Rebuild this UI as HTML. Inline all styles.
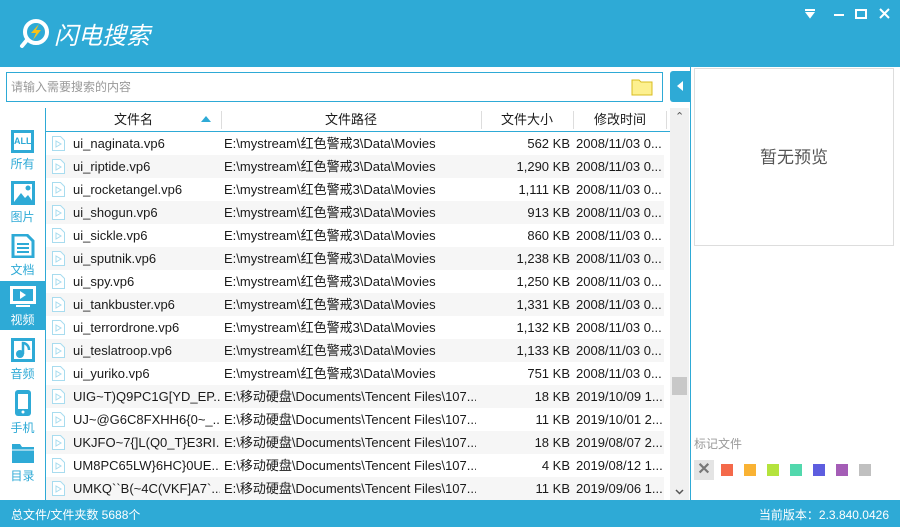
<!DOCTYPE html>
<html><head><meta charset="utf-8"><style>
*{margin:0;padding:0;box-sizing:border-box}
body{width:900px;height:527px;position:relative;overflow:hidden;background:#fff;font-family:"Liberation Sans","Noto Sans CJK SC",sans-serif;font-size:13px;color:#1a1a1a}
.abs{position:absolute}
#title{left:0;top:0;width:900px;height:67px;background:#2eaad6}
#status{left:0;top:500px;width:900px;height:27px;background:#2eaad6;color:#fff;font-size:12px}
.side{left:0;top:108px;width:46px;height:392px;border-right:1px solid #2eaad6}
.si{position:absolute;left:0;width:45px;text-align:center;color:#2eaad6;font-size:12px}
.row{position:absolute;left:46px;width:620px;height:23px;line-height:23px;white-space:nowrap}
.row span{position:absolute;overflow:hidden}
.hd{position:absolute;top:108px;height:23px;line-height:23px;font-size:13px}
.sep{position:absolute;top:111px;width:1px;height:18px;background:#ddd}
</style></head><body>
<div id="title" class="abs">
 <svg class="abs" style="left:18px;top:17px" width="34" height="34" viewBox="0 0 34 34"><circle cx="18" cy="15" r="11" fill="none" stroke="#fff" stroke-width="4"/><path d="M9 23 L4 29" stroke="#fff" stroke-width="4" stroke-linecap="round"/><path d="M21 7 L13 16 L18 16 L15 23 L23 13 L18 13 Z" fill="#f5c218"/></svg>
 <div class="abs" style="left:54px;top:16px;font-size:24px;color:#fff;font-style:italic">闪电搜索</div>
 <svg class="abs" style="left:805px;top:8px" width="90" height="14" viewBox="0 0 90 14"><path d="M0 2h10M2 5h6l-3 4z" stroke="#fff" stroke-width="2" fill="#fff"/><path d="M29 7h10" stroke="#fff" stroke-width="2"/><rect x="51" y="2" width="10" height="8" fill="none" stroke="#fff" stroke-width="2"/><path d="M75 1l9 9M84 1l-9 9" stroke="#fff" stroke-width="2"/></svg>
</div>
<div class="abs" style="left:6px;top:72px;width:657px;height:30px;border:1px solid #2eaad6;color:#999;font-size:12px;line-height:28px;padding-left:4px">请输入需要搜索的内容</div>
<svg class="abs" style="left:631px;top:78px" width="22" height="18" viewBox="0 0 22 18"><path d="M1 2h7l2 2h11v13H1z" fill="#fdf08f" stroke="#d8bc20"/></svg>
<div class="abs" style="left:670px;top:71px;width:20px;height:31px;background:#2eaad6;border-radius:3px 0 0 3px"></div>
<svg class="abs" style="left:677px;top:81px" width="6" height="10"><path d="M6 0v10L0 5z" fill="#fff"/></svg>
<div class="abs" style="left:690px;top:67px;width:1px;height:433px;background:#2eaad6"></div>
<div class="abs" style="left:694px;top:68px;width:200px;height:178px;border:1px solid #ddd;color:#555;font-size:17px;text-align:center;line-height:178px">暂无预览</div>
<div class="abs" style="left:694px;top:435px;color:#999;font-size:12px">标记文件</div>
<div class="abs" style="left:694px;top:460px;width:20px;height:20px;background:#e4e4e4;color:#777;font-size:16px;font-weight:bold;text-align:center;line-height:20px">✕</div>
<div class="abs" style="left:721px;top:464px;width:12px;height:12px;background:#f4694a"></div>
<div class="abs" style="left:744px;top:464px;width:12px;height:12px;background:#f9b233"></div>
<div class="abs" style="left:767px;top:464px;width:12px;height:12px;background:#b4e33d"></div>
<div class="abs" style="left:790px;top:464px;width:12px;height:12px;background:#52d8ad"></div>
<div class="abs" style="left:813px;top:464px;width:12px;height:12px;background:#5d5ddf"></div>
<div class="abs" style="left:836px;top:464px;width:12px;height:12px;background:#a45db6"></div>
<div class="abs" style="left:859px;top:464px;width:12px;height:12px;background:#c0c0c0"></div>

<div class="abs side">
 <div class="si" style="top:22px"><div style="margin:0 auto;width:23px;height:23px;border:3px solid #2eaad6;font-size:9px;font-weight:bold;line-height:17px">ALL</div><div style="margin-top:2px">所有</div></div>
 <div class="si" style="top:73px"><svg width="24" height="24"><rect x="1.5" y="1.5" width="21" height="21" fill="none" stroke="#2eaad6" stroke-width="3"/><path d="M3 21l7-9 4 5 3-3 5 7z" fill="#2eaad6"/><circle cx="17" cy="7" r="2.5" fill="#2eaad6"/></svg><div>图片</div></div>
 <div class="si" style="top:126px"><svg width="24" height="24"><path d="M2 1h14l6 6v16H2z" fill="none" stroke="#2eaad6" stroke-width="3"/><path d="M6 10h12M6 14h12M6 18h12" stroke="#2eaad6" stroke-width="2"/></svg><div>文档</div></div>
 <div style="position:absolute;left:0;top:173px;width:45px;height:49px;background:#2eaad6"></div>
 <div class="si" style="top:178px;color:#fff"><svg width="26" height="22"><rect x="1.5" y="1.5" width="23" height="15" fill="none" stroke="#fff" stroke-width="3"/><path d="M10 5v8l6-4z" fill="#fff"/><path d="M6 20h14" stroke="#fff" stroke-width="2"/></svg><div>视频</div></div>
 <div class="si" style="top:230px"><svg width="24" height="24"><rect x="1.5" y="1.5" width="21" height="21" fill="none" stroke="#2eaad6" stroke-width="3"/><circle cx="9" cy="16" r="4" fill="#2eaad6"/><path d="M12 16V5c3 0 6 3 6 7" stroke="#2eaad6" stroke-width="2.5" fill="none"/></svg><div>音频</div></div>
 <div class="si" style="top:282px"><svg width="16" height="26"><rect x="0" y="0" width="16" height="26" rx="3" fill="#2eaad6"/><rect x="3" y="4" width="10" height="15" fill="#fff"/><circle cx="8" cy="22" r="1.5" fill="#fff"/></svg><div>手机</div></div>
 <div class="si" style="top:334px"><svg width="24" height="22"><path d="M1 2h8l2 3h12v16H1z" fill="#2eaad6"/><path d="M1 8h22" stroke="#fff" stroke-width="1"/></svg><div>目录</div></div>
</div>

<div class="hd" style="left:114px">文件名</div>
<svg class="abs" style="left:201px;top:116px" width="10" height="6"><path d="M0 6L5 0l5 6z" fill="#2eaad6"/></svg>
<div class="sep" style="left:221px"></div>
<div class="hd" style="left:325px">文件路径</div>
<div class="sep" style="left:481px"></div>
<div class="hd" style="left:501px">文件大小</div>
<div class="sep" style="left:573px"></div>
<div class="hd" style="left:594px">修改时间</div>
<div class="sep" style="left:666px"></div>
<div class="abs" style="left:46px;top:131px;width:625px;height:1px;background:#2eaad6"></div>
<div class="abs" style="left:670px;top:108px;width:19px;height:392px;background:#f0f0f0"></div>
<div class="abs" style="left:675px;top:110px;color:#555;font-size:11px">⌃</div>
<div class="abs" style="left:672px;top:377px;width:15px;height:18px;background:#c8c8c8"></div>
<svg class="abs" style="left:675px;top:489px" width="9" height="6"><path d="M1 1l3.5 3.5L8 1" stroke="#555" stroke-width="1.5" fill="none"/></svg>

<div id="rows"></div>
<script>
var d=[["ui_naginata.vp6","E:\\mystream\\红色警戒3\\Data\\Movies","562 KB","2008/11/03 0..."],
["ui_riptide.vp6","E:\\mystream\\红色警戒3\\Data\\Movies","1,290 KB","2008/11/03 0..."],
["ui_rocketangel.vp6","E:\\mystream\\红色警戒3\\Data\\Movies","1,111 KB","2008/11/03 0..."],
["ui_shogun.vp6","E:\\mystream\\红色警戒3\\Data\\Movies","913 KB","2008/11/03 0..."],
["ui_sickle.vp6","E:\\mystream\\红色警戒3\\Data\\Movies","860 KB","2008/11/03 0..."],
["ui_sputnik.vp6","E:\\mystream\\红色警戒3\\Data\\Movies","1,238 KB","2008/11/03 0..."],
["ui_spy.vp6","E:\\mystream\\红色警戒3\\Data\\Movies","1,250 KB","2008/11/03 0..."],
["ui_tankbuster.vp6","E:\\mystream\\红色警戒3\\Data\\Movies","1,331 KB","2008/11/03 0..."],
["ui_terrordrone.vp6","E:\\mystream\\红色警戒3\\Data\\Movies","1,132 KB","2008/11/03 0..."],
["ui_teslatroop.vp6","E:\\mystream\\红色警戒3\\Data\\Movies","1,133 KB","2008/11/03 0..."],
["ui_yuriko.vp6","E:\\mystream\\红色警戒3\\Data\\Movies","751 KB","2008/11/03 0..."],
["UIG~T)Q9PC1G[YD_EP...","E:\\移动硬盘\\Documents\\Tencent Files\\107...","18 KB","2019/10/09 1..."],
["UJ~@G6C8FXHH6{0~_...","E:\\移动硬盘\\Documents\\Tencent Files\\107...","11 KB","2019/10/01 2..."],
["UKJFO~7{]L(Q0_T}E3RI...","E:\\移动硬盘\\Documents\\Tencent Files\\107...","18 KB","2019/08/07 2..."],
["UM8PC65LW}6HC}0UE...","E:\\移动硬盘\\Documents\\Tencent Files\\107...","4 KB","2019/08/12 1..."],
["UMKQ``B(~4C(VKF]A7`...","E:\\移动硬盘\\Documents\\Tencent Files\\107...","11 KB","2019/09/06 1..."]];
var h="";d.forEach(function(r,i){var t=132+i*23;
h+='<div class="row" style="top:'+t+'px;width:618px;background:'+(i%2?'#f6f6f6':'#fff')+'">'+
'<svg style="position:absolute;left:6px;top:4px" width="13" height="15"><path d="M.5.5h8l4 4v10H.5z" fill="#fff" stroke="#a8dcef"/><path d="M4 5v6l5-3z" fill="none" stroke="#a8dcef"/></svg>'+
'<span style="left:27px;width:147px">'+r[0]+'</span><span style="left:178px;width:252px">'+r[1]+'</span><span style="right:94px">'+r[2]+'</span><span style="left:530px">'+r[3]+'</span></div>';});
document.getElementById("rows").innerHTML=h;
</script>
<div id="status" class="abs"><span class="abs" style="left:11px;top:6px">总文件/文件夹数 5688个</span><span class="abs" style="right:11px;top:6px">当前版本：2.3.840.0426</span></div>
</body></html>
